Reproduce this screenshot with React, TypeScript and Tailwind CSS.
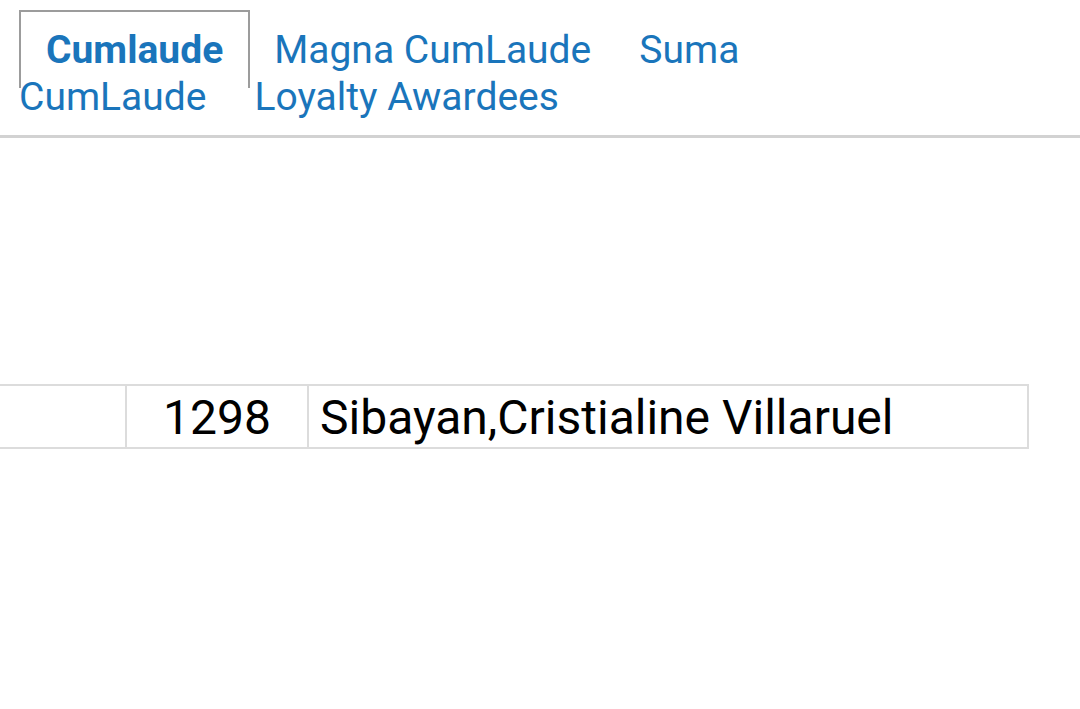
export default function App() {
  return (
    <div className="w-[1080px] h-[709px] overflow-hidden bg-white font-['Roboto','Noto_Sans',sans-serif]">
      <ul className="m-0 list-none pl-[19px] pr-[300px] pt-[27px] pb-[14px] border-b-[3px] border-[#d2d2d2] text-[39px] leading-[47px] text-[#1a75bb]">
        <li className="inline">
          <a className="inline border-2 border-b-0 border-[#9c9c9c] px-[25px] py-[15px] font-bold">Cumlaude</a>
        </li>
        <li className="inline">
          <a className="inline border-2 border-transparent px-[22px] py-[15px]">Magna CumLaude</a>
        </li>
        <li className="inline">
          <a className="inline border-2 border-transparent px-[22px] py-[15px]">Suma CumLaude</a>
        </li>
        <li className="inline">
          <a className="inline border-2 border-transparent px-[22px] py-[15px]">Loyalty Awardees</a>
        </li>
      </ul>

      <div className="pt-[246px]">
        <table className="border-collapse text-[48px] leading-[56px] text-black">
          <tbody>
            <tr>
              <td className="w-[126px] h-[63px] border-2 border-l-0 border-[#dcdcdc]"></td>
              <td className="w-[182px] h-[63px] border-2 border-[#dcdcdc] text-center align-top pt-[4px] pb-0">1298</td>
              <td className="w-[720px] h-[63px] border-2 border-[#dcdcdc] pl-[11px] align-top pt-[4px] pb-0">Sibayan,Cristialine Villaruel</td>
            </tr>
          </tbody>
        </table>
      </div>
    </div>
  );
}
